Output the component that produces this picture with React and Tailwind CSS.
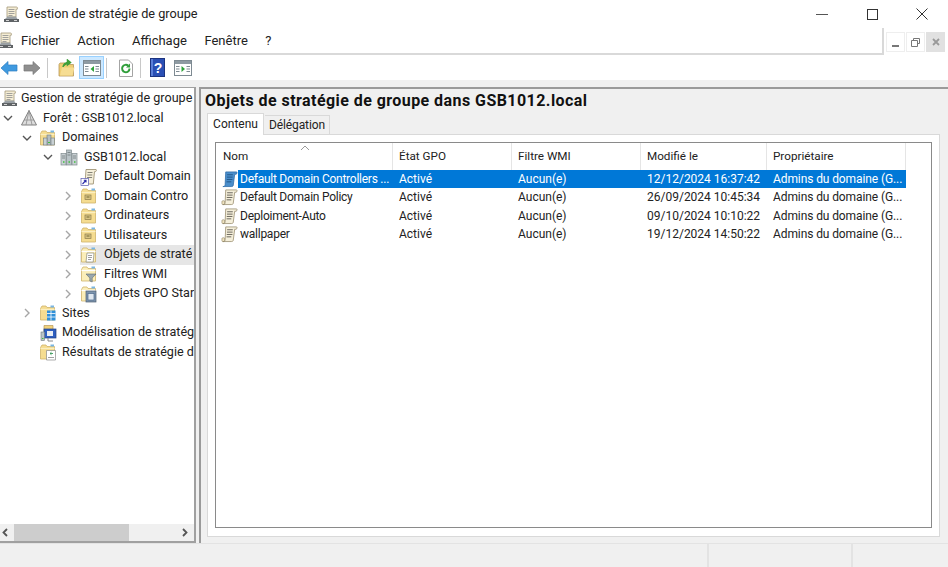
import React from 'react';

const ConsoleIcon = ({ size = 17 }) => (
  <svg width={size} height={size} viewBox="0 0 17 17">
    <path d="M4 1h9.500c1 0 1.300 1.200.8 2.200H13V11H4z" fill="#f6eed6" stroke="#a39878" strokeWidth="0.8" />
    <path d="M5.500 3.500h6M5.500 5.500h6M5.500 7.500h6M5.500 9.500h4" stroke="#8d8d8d" strokeWidth="0.8" />
    <path d="M4.500 10.500l-2.500 2.500h12.500l-1.500-2.500z" fill="#9aa0a4" />
    <rect x="1" y="13" width="15" height="3" fill="#5f6366" />
    <path d="M3 14.500h3M11 14.500h3" stroke="#d4d4d4" />
  </svg>
);

const ForestIcon = () => (
  <svg width="18" height="18" viewBox="0 0 18 18">
    <path d="M9 1.500L16.500 16h-15z" fill="#dcdcdc" stroke="#808080" strokeWidth="1" />
    <path d="M9 1.500L6 16M9 1.500L12 16M4 11h10" stroke="#8f8f8f" strokeWidth="0.8" fill="none" />
  </svg>
);

const ServerIcon = () => (
  <svg width="18" height="17" viewBox="0 0 18 17">
    <rect x="6.500" y="1" width="5" height="15" fill="#b9c3c7" stroke="#7f8a8e" strokeWidth="0.7" />
    <rect x="1" y="4.500" width="5" height="11.500" fill="#c8d0d3" stroke="#7f8a8e" strokeWidth="0.7" />
    <rect x="12" y="4.500" width="5" height="11.500" fill="#c8d0d3" stroke="#7f8a8e" strokeWidth="0.7" />
    <path d="M2 7h3M2 9h3M7.500 3.500h3M7.500 6h3M13 7h3M13 9h3" stroke="#6d777a" strokeWidth="0.8" />
    <path d="M3 13h1.500M8.500 13H10M14 13h1.500" stroke="#3fbf3f" strokeWidth="1.500" />
  </svg>
);

// dossier jaune, avec le petit dessin par dessus selon le type
const Folder = ({ open, children }) => (
  <svg width="18" height="18" viewBox="0 0 18 18">
    <path d="M1.500 4.500V16h14V3.500H8L7 2H3z" fill={open ? '#fbeeb9' : '#f5dc90'} stroke="#cfb26a" strokeWidth="0.8" />
    <path d="M1.500 5.500h14" stroke={open ? '#fff' : '#fbeec0'} strokeWidth="1.200" />
    <rect x="11.500" y="1.500" width="3.500" height="2" fill="#7ab6e2" />
    {children}
  </svg>
);

const FolderGlyph = () => (
  <Folder>
    <rect x="5" y="8" width="6" height="4.500" fill="#d8c483" stroke="#8a7a4a" strokeWidth="0.7" />
    <path d="M6.500 10h3" stroke="#5b5020" strokeWidth="0.8" />
  </Folder>
);

const DomainsIcon = () => (
  <Folder>
    <rect x="8" y="6" width="4" height="10" fill="#b4bec2" stroke="#6f7a7e" strokeWidth="0.6" />
    <rect x="4.500" y="9" width="3.500" height="7" fill="#c8d0d3" stroke="#6f7a7e" strokeWidth="0.6" />
    <rect x="12" y="9" width="3.500" height="7" fill="#c8d0d3" stroke="#6f7a7e" strokeWidth="0.6" />
    <path d="M9 13.500h2" stroke="#3fbf3f" strokeWidth="1.200" />
  </Folder>
);

const GpoFolderIcon = () => (
  <Folder open>
    <path d="M7 7h7l-.8 9H6z" fill="#fff" stroke="#8a8a7a" strokeWidth="0.7" />
    <path d="M8 9.500h4M8 11.500h4M8 13.500h3" stroke="#777" strokeWidth="0.7" />
  </Folder>
);

const WmiIcon = () => (
  <Folder open>
    <path d="M6 9h10l-3.800 4v4l-2.400-1v-3z" fill="#9aa7ad" stroke="#5f6b70" strokeWidth="0.6" />
  </Folder>
);

const StarterIcon = () => (
  <Folder open>
    <rect x="6" y="6" width="10" height="11" fill="#7d94ad" stroke="#4d5f72" strokeWidth="0.7" />
    <rect x="8" y="8.500" width="6" height="6.500" fill="#dfe7ef" stroke="#4d6a8d" strokeWidth="0.7" />
  </Folder>
);

const SitesIcon = () => (
  <Folder>
    <rect x="8" y="6.500" width="8.500" height="10" fill="#2f8fd8" />
    <path d="M8 9.500h8.500M8 13h8.500M12 6.500v10" stroke="#fff" strokeWidth="0.8" />
  </Folder>
);

const ModelingIcon = () => (
  <svg width="18" height="18" viewBox="0 0 18 18">
    <path d="M5 1.500h9v6H5z" fill="#f1d27c" stroke="#b8985a" strokeWidth="0.7" />
    <rect x="5" y="5" width="12" height="9" fill="#2f5fc0" stroke="#203f80" strokeWidth="0.7" />
    <rect x="8" y="7" width="6" height="5" fill="#e9eef5" />
    <rect x="2" y="8" width="3.500" height="8.500" fill="#b9c3c7" stroke="#6f7a7e" strokeWidth="0.6" />
    <path d="M3 14.500h1.500" stroke="#3fbf3f" strokeWidth="1.200" />
    <path d="M9 14v3h5" stroke="#888" strokeWidth="1" fill="none" />
  </svg>
);

const ResultsIcon = () => (
  <Folder>
    <path d="M7.500 7.500h9v9.500h-9z" fill="#fff" stroke="#8a8a8a" strokeWidth="0.7" />
    <path d="M14 10.500h-3M11 10.500l1.500-1.300M11 10.500l1.500 1.300" stroke="#3a9a5a" strokeWidth="0.9" fill="none" />
    <path d="M9 14.500h6" stroke="#888" strokeWidth="0.8" />
  </Folder>
);

const ScriptIcon = () => (
  <svg width="17" height="18" viewBox="0 0 18 18">
    <rect x="1" y="13" width="3" height="4" rx="1" fill="#f0e4c0" stroke="#95896a" strokeWidth="0.7" />
    <path d="M5 1.500h11.500c.7 0 .7 2-.5 2.500l-1.500 0L13 15.500c-.2 1.200-1 1.500-2 1.500H2c1.500 0 2.200-.6 2.400-2z" fill="#f5efda" stroke="#95896a" strokeWidth="0.8" />
    <path d="M6.500 4.500h6M6.300 7h6M6.100 9.500h6M5.900 12h5" stroke="#55534a" strokeWidth="0.9" />
  </svg>
);

const ScriptSelectedIcon = () => (
  <svg width="17" height="18" viewBox="0 0 18 18">
    <path d="M5 1.500h11.500c.7 0 .7 2-.5 2.500l-1.500 0L13 15.500c-.2 1.200-1 1.500-2 1.500H2c1.500 0 2.200-.6 2.400-2z" fill="#4a8ecb" stroke="#2a6aa8" strokeWidth="0.8" />
    <path d="M6.500 4.500h6M6.300 7h6M6.100 9.500h6M5.900 12h5" stroke="#1d4f80" strokeWidth="0.9" />
  </svg>
);

const DefaultDomainIcon = () => (
  <svg width="18" height="18" viewBox="0 0 18 18">
    <path d="M6 1.500h10c.6 0 .6 1.700-.3 2l-1.200.2L13.300 16H5z" fill="#f5efda" stroke="#95896a" strokeWidth="0.8" />
    <path d="M7.500 4.500h5M7.300 7h5M7.100 9.500h5" stroke="#66645a" strokeWidth="0.8" />
    <rect x="1" y="10.500" width="7.500" height="7" fill="#fff" stroke="#5a5ab0" strokeWidth="0.7" />
    <path d="M2.500 16l3.300-3.500M3.800 12.300h2.200v2.200" stroke="#2a2aa8" strokeWidth="1.100" fill="none" />
  </svg>
);

const Chevron = ({ open }) => (
  <svg width="10" height="10" viewBox="0 0 10 10">
    {open ? (
      <path d="M1 3l4 4 4-4" fill="none" stroke="#555" strokeWidth="1.400" />
    ) : (
      <path d="M3 1l4 4-4 4" fill="none" stroke="#a6a6a6" strokeWidth="1.400" />
    )}
  </svg>
);

const NavArrow = ({ color, edge, flip }) => (
  <svg width="18" height="16" viewBox="0 0 18 16" className={flip ? '-scale-x-100' : ''}>
    <path d="M1 8l7-6.500V5h9v6H8v3.500z" fill={color} stroke={edge} strokeWidth="0.7" />
  </svg>
);

const FolderUpIcon = () => (
  <svg width="17" height="18" viewBox="0 0 17 18">
    <path d="M1 5.500V17h14.500V5.500H8L7 4H2z" fill="#efce73" stroke="#b8985a" strokeWidth="0.8" />
    <path d="M2 16.500l2-8h12.500l-2 8z" fill="#f6dd93" />
    <path d="M5 8c.5-3 3-4.500 6-4.500M9.500 1l3 2.500-3 2.500z" stroke="#3e9f3a" fill="#3e9f3a" strokeWidth="1.500" />
  </svg>
);

const PaneIcon = ({ arrow }) => (
  <svg width="18" height="16" viewBox="0 0 18 16">
    <rect x="0.500" y="0.500" width="17" height="15" fill="#fff" stroke="#7e8a92" />
    <rect x="1" y="1" width="16" height="3" fill="#8e9aa2" />
    <path d="M2 6.500h3.500M2 9h3.500M2 11.500h3.500M12.500 6.500H16M12.500 9H16M12.500 11.500H16" stroke="#7e8a92" strokeWidth="1.200" />
    <path d={arrow === 'left' ? 'M11 6v6L7.500 9z' : 'M7.500 6v6L11 9z'} fill="#2fa33a" />
  </svg>
);

const RefreshIcon = () => (
  <svg width="16" height="18" viewBox="0 0 16 18">
    <path d="M1.500 1h9l4 4v12.500h-13z" fill="#fff" stroke="#a4a4a4" />
    <path d="M11.500 9.500a3.700 3.700 0 1 1-1.200-2.700" fill="none" stroke="#2f9e3a" strokeWidth="2" />
    <path d="M12 4.500v4h-4z" fill="#2f9e3a" />
  </svg>
);

const HelpIcon = () => (
  <svg width="15" height="19" viewBox="0 0 15 19">
    <rect x="0.500" y="0.500" width="14" height="18" fill="#2a4fb4" stroke="#1c3480" />
    <rect x="1" y="1" width="2" height="17" fill="#5b7fd8" />
    <text x="8" y="14.500" fontSize="14" fontWeight="700" fill="#fff" textAnchor="middle" fontFamily="Liberation Sans, sans-serif">?</text>
  </svg>
);

const TreeRow = ({ indent, expander, icon, label, selected, tight }) => (
  <div className={`flex h-[19.5px] items-center overflow-hidden whitespace-nowrap ${indent}`}>
    <span className="flex w-[16px] shrink-0 justify-center">{expander}</span>
    <div className={`ml-[4px] flex h-full min-w-0 flex-1 items-center ${selected ? 'bg-[#e6e6e6]' : ''}`}>
      <span className="flex w-[18px] shrink-0 items-center justify-center">{icon}</span>
      <span className={`min-w-0 overflow-hidden ${tight ? 'ml-[5px]' : 'ml-[6px]'}`}>{label}</span>
    </div>
  </div>
);

const treeRows = [
  { indent: 'pl-0', expander: <Chevron open />, icon: <ForestIcon />, label: 'Forêt : GSB1012.local', tight: true },
  { indent: 'pl-[19px]', expander: <Chevron open />, icon: <DomainsIcon />, label: 'Domaines', tight: true },
  { indent: 'pl-[40px]', expander: <Chevron open />, icon: <ServerIcon />, label: 'GSB1012.local' },
  { indent: 'pl-[60px]', expander: null, icon: <DefaultDomainIcon />, label: 'Default Domain' },
  { indent: 'pl-[60px]', expander: <Chevron />, icon: <FolderGlyph />, label: 'Domain Contro' },
  { indent: 'pl-[60px]', expander: <Chevron />, icon: <FolderGlyph />, label: 'Ordinateurs' },
  { indent: 'pl-[60px]', expander: <Chevron />, icon: <FolderGlyph />, label: 'Utilisateurs' },
  { indent: 'pl-[60px]', expander: <Chevron />, icon: <GpoFolderIcon />, label: 'Objets de straté', selected: true },
  { indent: 'pl-[60px]', expander: <Chevron />, icon: <WmiIcon />, label: 'Filtres WMI' },
  { indent: 'pl-[60px]', expander: <Chevron />, icon: <StarterIcon />, label: 'Objets GPO Star' },
  { indent: 'pl-[19px]', expander: <Chevron />, icon: <SitesIcon />, label: 'Sites', tight: true },
  { indent: 'pl-[19px]', expander: null, icon: <ModelingIcon />, label: 'Modélisation de stratég', tight: true },
  { indent: 'pl-[19px]', expander: null, icon: <ResultsIcon />, label: 'Résultats de stratégie d', tight: true },
];

const gpos = [
  { name: 'Default Domain Controllers ...', date: '12/12/2024 16:37:42', selected: true },
  { name: 'Default Domain Policy', date: '26/09/2024 10:45:34' },
  { name: 'Deploiment-Auto', date: '09/10/2024 10:10:22' },
  { name: 'wallpaper', date: '19/12/2024 14:50:22' },
];

const columns = ['État GPO', 'Filtre WMI', 'Modifié le', 'Propriétaire'];

export default function App() {
  return (
    <div className="flex h-[567px] w-full flex-col overflow-hidden bg-white text-[12px] text-[#222] [font-family:Roboto,sans-serif]">
      {/* barre de titre */}
      <div className="flex h-[28px] shrink-0 items-center">
        <span className="ml-[3px] flex"><ConsoleIcon /></span>
        <span className="ml-[5px] text-[12.7px]">Gestion de stratégie de groupe</span>
        <div className="ml-auto flex pr-[1px]">
          <div className="flex h-[25px] w-[50px] items-center justify-center">
            <div className="h-px w-[12px] bg-[#555]" />
          </div>
          <div className="flex h-[25px] w-[50px] items-center justify-center">
            <div className="h-[11px] w-[11px] border border-[#333]" />
          </div>
          <div className="flex h-[25px] w-[50px] items-center justify-center">
            <svg width="12" height="12" viewBox="0 0 12 12"><path d="M.5.5l11 11M11.500.5l-11 11" stroke="#333" /></svg>
          </div>
        </div>
      </div>

      {/* menus */}
      <div className="flex h-[27px] shrink-0">
        <div className="flex flex-1 items-center gap-[17.5px] border-b-2 border-r-2 border-[#d9d9d9] text-[13px]">
          <span className="-ml-[3px] -mr-[13.5px] flex"><ConsoleIcon /></span>
          <span className="ml-[3px]">Fichier</span>
          <span>Action</span>
          <span>Affichage</span>
          <span>Fenêtre</span>
          <span>?</span>
        </div>
        <div className="flex w-[64px] items-start gap-px pl-[2px] pt-[4px]">
          <div className="flex h-[20px] w-[19px] items-end justify-center border border-[#eee] pb-[4px]">
            <div className="h-[2px] w-[7px] bg-[#777]" />
          </div>
          <div className="flex h-[20px] w-[19px] items-center justify-center border border-[#eee]">
            <svg width="9" height="9" viewBox="0 0 9 9"><path d="M2.500 2V.5h6v5H7M.5 2.500h6v6h-6z" fill="none" stroke="#777" /></svg>
          </div>
          <div className="flex h-[20px] w-[19px] items-center justify-center bg-[#e1e1e1]">
            <svg width="8" height="8" viewBox="0 0 8 8"><path d="M1 1l6 6M7 1L1 7" stroke="#999" strokeWidth="1.800" /></svg>
          </div>
        </div>
      </div>

      {/* barre d'outils */}
      <div className="flex h-[25px] shrink-0 items-center">
        <NavArrow color="#3f9ae0" edge="#2f7fc0" />
        <span className="ml-[5px] flex"><NavArrow color="#8f8f8f" edge="#777" flip /></span>
        <div className="ml-[6px] h-[20px] w-px bg-[#c8c8c8]" />
        <span className="ml-[10px] flex"><FolderUpIcon /></span>
        <div className="ml-[4px] flex h-[23px] w-[25px] items-center justify-center border border-[#99d1ff] bg-[#cce8ff]">
          <PaneIcon arrow="left" />
        </div>
        <div className="ml-[2px] h-[20px] w-px bg-[#c8c8c8]" />
        <span className="ml-[11px] flex"><RefreshIcon /></span>
        <div className="ml-[6px] h-[20px] w-px bg-[#c8c8c8]" />
        <span className="ml-[9px] flex"><HelpIcon /></span>
        <span className="ml-[9px] flex"><PaneIcon arrow="right" /></span>
      </div>
      <div className="h-[7px] shrink-0 bg-[#f0f0f0]" />

      <div className="flex min-h-0 flex-1 bg-[#f0f0f0]">
        {/* arbre */}
        <div className="flex w-[196px] shrink-0 flex-col border-y-2 border-r-2 border-[#a0a0a0] bg-white [border-top-width:1px]">
          <div className="min-h-0 flex-1 overflow-hidden pt-[1px] text-[12.6px]">
            <div className="flex h-[19.5px] items-center overflow-hidden whitespace-nowrap">
              <span className="flex w-[18px] shrink-0 justify-center"><ConsoleIcon /></span>
              <span className="ml-[3px]">Gestion de stratégie de groupe</span>
            </div>
            {treeRows.map((row) => (
              <TreeRow key={row.label} {...row} />
            ))}
          </div>
          <div className="flex h-[17px] shrink-0 items-center bg-[#f0f0f0]">
            <svg width="14" height="17" viewBox="0 0 14 17"><path d="M7 5L3.500 8.500 7 12" fill="none" stroke="#555" strokeWidth="1.800" /></svg>
            <div className="h-full w-[115px] bg-[#cdcdcd]" />
            <svg className="ml-auto mr-[3px]" width="14" height="17" viewBox="0 0 14 17"><path d="M6 5l3.500 3.500L6 12" fill="none" stroke="#555" strokeWidth="1.800" /></svg>
          </div>
        </div>

        {/* panneau de droite */}
        <div className="ml-[3px] flex min-w-0 flex-1 flex-col border-l-2 border-t-2 border-[#9a9a9a] pb-[6px] pr-[8px]">
          <div className="flex h-[23px] shrink-0 items-center whitespace-nowrap pl-[4px] text-[16px] font-bold tracking-[0.44px] text-[#111]">
            Objets de stratégie de groupe dans GSB1012.local
          </div>
          <div className="flex h-[22px] shrink-0 items-end pl-[6px]">
            <div className="relative z-10 -mb-px flex h-[22px] w-[57px] items-center justify-center border border-b-0 border-[#d9d9d9] bg-white pb-[2px]">Contenu</div>
            <div className="ml-[1px] flex h-[19px] w-[65px] items-center justify-center border border-b-0 border-l-0 border-[#d9d9d9] bg-[#f0f0f0] tracking-[-0.1px]">Délégation</div>
          </div>
          <div className="ml-[6px] flex min-h-0 flex-1 flex-col border border-[#d9d9d9] bg-white px-[7px] pb-[8px] pt-[7px]">
            <div className="min-h-0 flex-1 border border-[#8a8a8a] bg-white">
              <div className="relative grid h-[27px] w-fit grid-cols-[177px_119px_129px_126px_139px] text-[11.7px]">
                <div className="flex items-center border-r border-[#e5e5e5] pl-[7px] pt-[1px]">Nom</div>
                {columns.map((col) => (
                  <div key={col} className="flex items-center border-r border-[#e5e5e5] pl-[6px] pt-[1px]">{col}</div>
                ))}
                <svg className="absolute left-[84px] top-[2px]" width="10" height="6" viewBox="0 0 10 6"><path d="M1 5l4-4 4 4" fill="none" stroke="#9a9a9a" /></svg>
              </div>
              {gpos.map((gpo) => (
                <div key={gpo.name} className="flex h-[18.33px] items-center whitespace-nowrap">
                  <span className="ml-[5px] flex w-[17px] shrink-0">{gpo.selected ? <ScriptSelectedIcon /> : <ScriptIcon />}</span>
                  <div className={`grid h-full grid-cols-[154px_119px_129px_126px_140px] items-center ${gpo.selected ? 'bg-[#0078d7] text-white' : ''}`}>
                    <span className="pl-[2px] tracking-[-0.25px]">{gpo.name}</span>
                    <span className="pl-[7px]">Activé</span>
                    <span className="pl-[7px]">Aucun(e)</span>
                    <span className="pl-[7px]">{gpo.date}</span>
                    <span className="pl-[7px] tracking-[-0.1px]">Admins du domaine (G...</span>
                  </div>
                </div>
              ))}
            </div>
          </div>
        </div>
      </div>

      {/* barre d'état */}
      <div className="flex h-[24px] shrink-0 border-t border-[#e3e3e3] bg-[#f0f0f0]">
        <div className="w-[709px] border-r-2 border-[#e3e3e3]" />
        <div className="w-[144px] border-r-2 border-[#e3e3e3]" />
      </div>
    </div>
  );
}
